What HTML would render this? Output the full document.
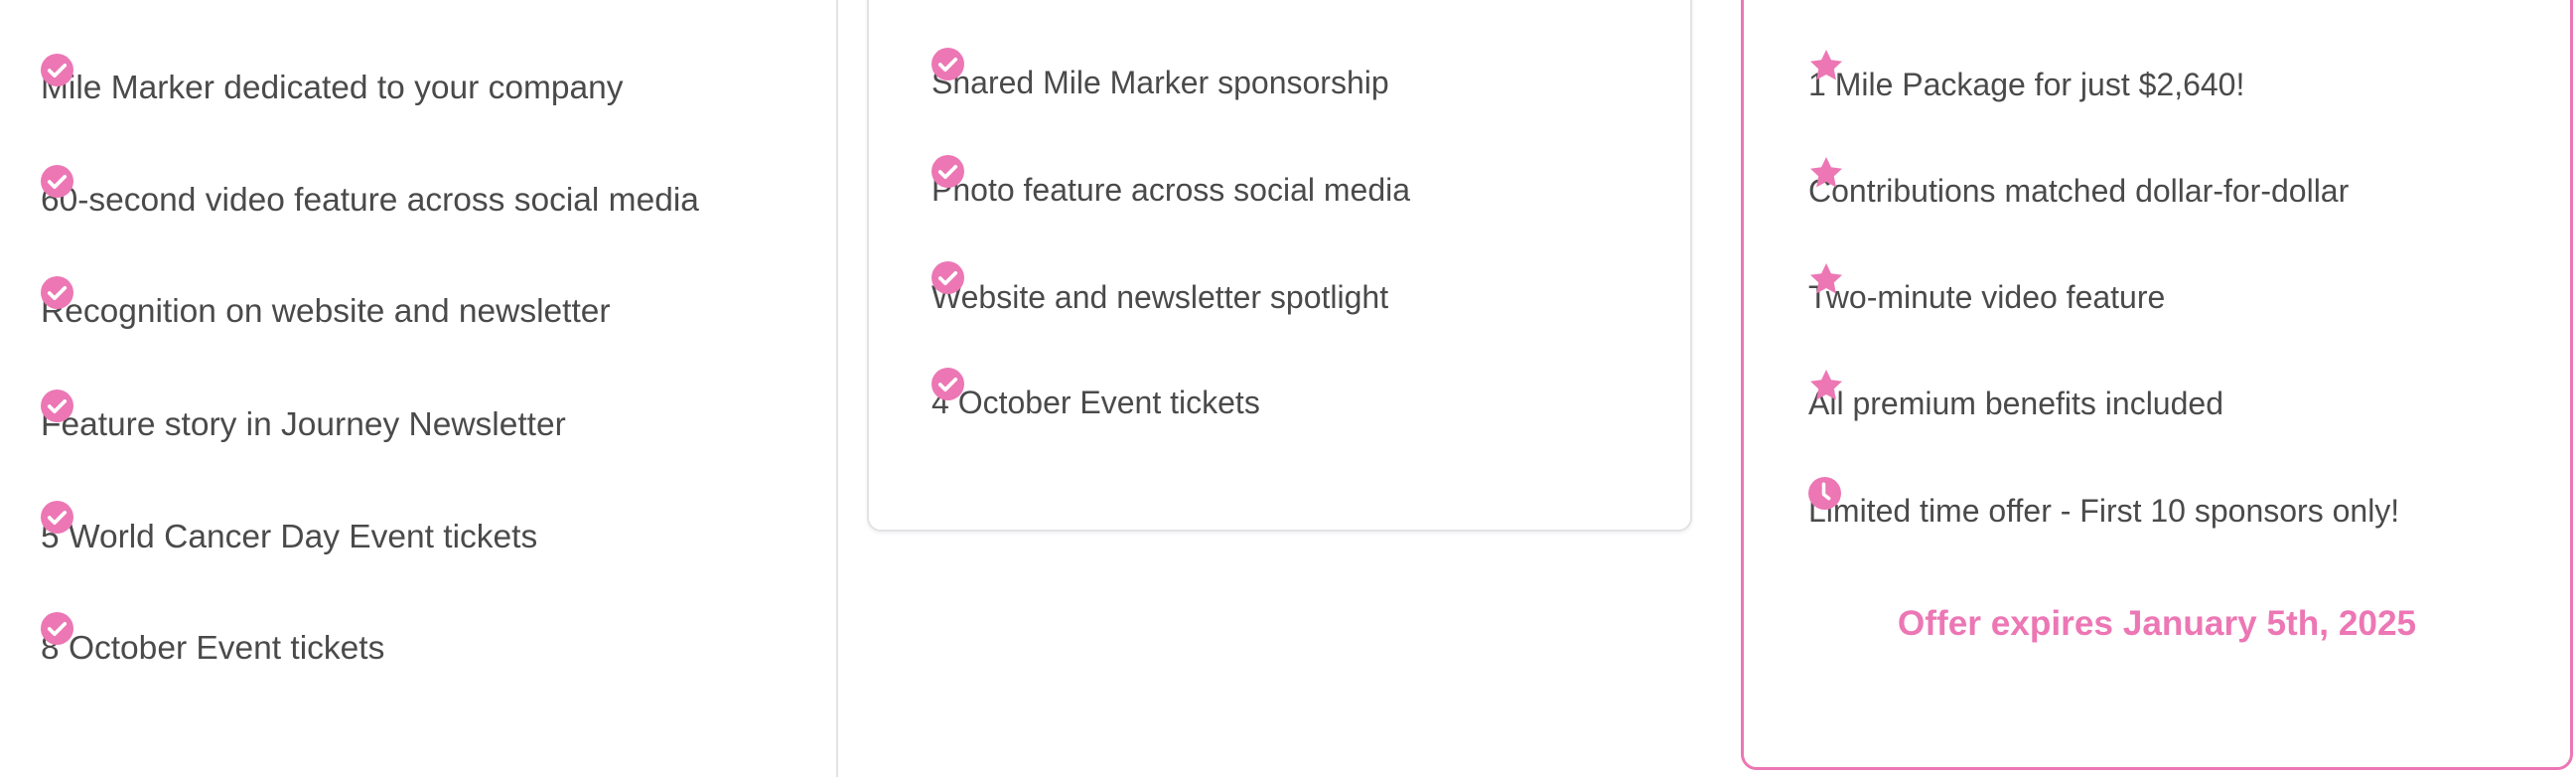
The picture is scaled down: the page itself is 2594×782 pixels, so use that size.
<!DOCTYPE html>
<html><head><style>
html,body{margin:0;padding:0;width:2594px;height:782px;overflow:hidden;background:#fff;font-family:"Liberation Sans",Arial,sans-serif;}
#w{position:relative;width:2594px;height:782px;overflow:hidden;}
.card{position:absolute;box-sizing:border-box;background:#fff;}
.t{position:absolute;font-size:33.5px;color:#4a4a4a;white-space:nowrap;line-height:1;}
.s{font-size:32px;}
.ic{position:absolute;width:33px;height:33px;}
</style></head><body><div id="w">
<div class="card" style="left:-20px;top:-30px;width:864px;height:830px;border:2px solid #e3e3e6;border-radius:14px;"></div>
<div class="card" style="left:873px;top:-30px;width:831px;height:565px;border:2px solid #e3e3e6;border-radius:14px;box-shadow:0 2px 4px rgba(0,0,0,0.06);"></div>
<div class="card" style="left:1753px;top:-30px;width:838px;height:805px;border:3px solid #ec77b4;border-radius:16px;"></div>

<svg width="0" height="0" style="position:absolute">
<defs>
<symbol id="chk" viewBox="0 0 32 32"><circle cx="16" cy="16" r="16" fill="#ec77b4"/><path d="M8.5 16.5l5 5 10-10" stroke="#fff" stroke-width="3.6" fill="none" stroke-linecap="round" stroke-linejoin="round"/></symbol>
<symbol id="star" viewBox="0 0 34 34"><path d="M17 1l4.9 10.3 11.1 1.4-8.2 7.7 2.1 11.1L17 26l-9.9 5.5 2.1-11.1L1 12.7l11.1-1.4z" fill="#ec77b4"/></symbol>
<symbol id="clk" viewBox="0 0 32 32"><circle cx="16" cy="16" r="16" fill="#ec77b4"/><path d="M15 7v10l5 4" stroke="#fff" stroke-width="3.4" fill="none" stroke-linecap="round" stroke-linejoin="round"/></symbol>
</defs></svg>

<div class="t" style="left:41px;top:72px">Mile Marker dedicated to your company</div>
<div class="t" style="left:41px;top:185px">60-second video feature across social media</div>
<div class="t" style="left:41px;top:297px">Recognition on website and newsletter</div>
<div class="t" style="left:41px;top:411px">Feature story in Journey Newsletter</div>
<div class="t" style="left:41px;top:524px">5 World Cancer Day Event tickets</div>
<div class="t" style="left:41px;top:636px">8 October Event tickets</div>
<svg class="ic" style="left:41px;top:54px"><use href="#chk"/></svg>
<svg class="ic" style="left:41px;top:166px"><use href="#chk"/></svg>
<svg class="ic" style="left:41px;top:278px"><use href="#chk"/></svg>
<svg class="ic" style="left:41px;top:392px"><use href="#chk"/></svg>
<svg class="ic" style="left:41px;top:504px"><use href="#chk"/></svg>
<svg class="ic" style="left:41px;top:616px"><use href="#chk"/></svg>

<div class="t s" style="left:938px;top:67px">Shared Mile Marker sponsorship</div>
<div class="t s" style="left:938px;top:175px">Photo feature across social media</div>
<div class="t s" style="left:938px;top:283px">Website and newsletter spotlight</div>
<div class="t s" style="left:938px;top:389px">4 October Event tickets</div>
<svg class="ic" style="left:938px;top:48px"><use href="#chk"/></svg>
<svg class="ic" style="left:938px;top:156px"><use href="#chk"/></svg>
<svg class="ic" style="left:938px;top:263px"><use href="#chk"/></svg>
<svg class="ic" style="left:938px;top:370px"><use href="#chk"/></svg>

<div class="t s" style="left:1821px;top:69px">1 Mile Package for just $2,640!</div>
<div class="t s" style="left:1821px;top:176px">Contributions matched dollar-for-dollar</div>
<div class="t s" style="left:1821px;top:283px">Two-minute video feature</div>
<div class="t s" style="left:1821px;top:390px">All premium benefits included</div>
<div class="t s" style="left:1821px;top:498px">Limited time offer - First 10 sponsors only!</div>
<svg style="position:absolute;left:1822px;top:49px;width:34px;height:34px"><use href="#star"/></svg>
<svg style="position:absolute;left:1822px;top:157px;width:34px;height:34px"><use href="#star"/></svg>
<svg style="position:absolute;left:1822px;top:264px;width:34px;height:34px"><use href="#star"/></svg>
<svg style="position:absolute;left:1822px;top:371px;width:34px;height:34px"><use href="#star"/></svg>
<svg class="ic" style="left:1821px;top:480px"><use href="#clk"/></svg>
<div class="t" style="left:1753px;width:838px;text-align:center;top:610px;font-weight:bold;color:#ec77b4;font-size:35.2px">Offer expires January 5th, 2025</div>
</div></body></html>
